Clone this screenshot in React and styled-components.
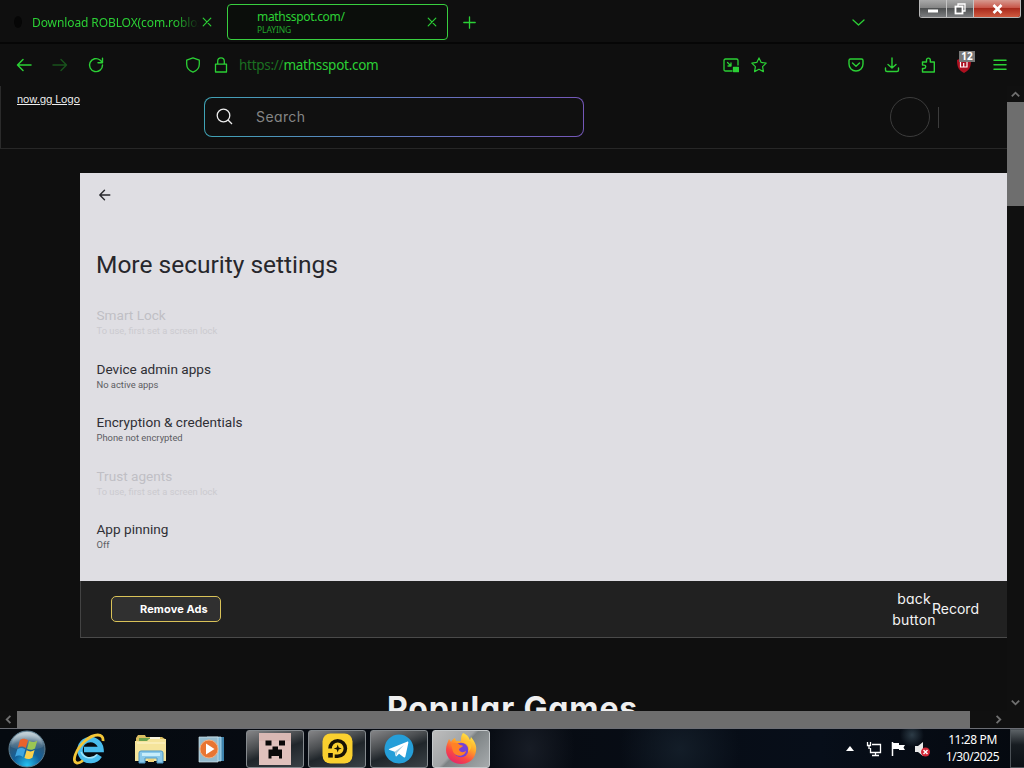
import React from 'react';
import styled, { createGlobalStyle } from 'styled-components';

const GlobalStyle = createGlobalStyle`
  * { box-sizing: border-box; }
  html, body { margin: 0; background: #0f0f0f; overflow: hidden; }
  svg { display: block; flex: none; }
`;

const GREEN = '#2bd035';
const UI = `"Noto Sans", "Open Sans", sans-serif`;
const WEB = `Inter, "Liberation Sans", sans-serif`;

const Screen = styled.div`
  width: 1024px;
  height: 768px;
  display: flex;
  flex-direction: column;
  background: #0f0f0f;
  overflow: hidden;
`;

/* ---------- tab strip ---------- */
const TabStrip = styled.header`
  height: 44px;
  flex: none;
  display: flex;
  align-items: flex-start;
  border-bottom: 2px solid #060606;
  font-family: ${UI};
  color: ${GREEN};
`;
const Tab = styled.div`
  display: flex;
  align-items: center;
  height: 36px;
  margin-top: 4px;
  width: ${(p) => p.$width}px;
  padding: 0 ${(p) => p.$right}px 0 ${(p) => p.$left}px;
  border: 1px solid ${(p) => (p.$active ? '#38cf3f' : 'transparent')};
  border-radius: 4px;
  background: ${(p) => (p.$active ? '#0b0e0b' : 'transparent')};
`;
const Favicon = styled.span`
  width: 8px;
  height: 12px;
  border-radius: 50%;
  margin-right: 10px;
  background: #060606;
`;
const TabText = styled.div`
  flex: 1;
  min-width: 0;
  overflow: hidden;
  white-space: nowrap;
  font-size: 12px;
  line-height: 15px;
  letter-spacing: ${(p) => p.$track || 0}px;
  ${(p) => p.$fade && 'mask-image: linear-gradient(90deg, #000 84%, transparent 99%);'}
`;
const TabStatus = styled.div`
  font-size: 8.5px;
  line-height: 12px;
  letter-spacing: -0.1px;
  color: #22a62b;
`;
const StripButton = styled.div`
  width: ${(p) => p.$width}px;
  height: 44px;
  display: flex;
  align-items: center;
  justify-content: center;
`;
const Spacer = styled.div`
  flex: 1;
`;
const WindowControls = styled.div`
  display: flex;
  height: 18px;
  width: 102px;
  margin: 0 3px 0 44px;
  border: 1px solid #b7b7b7;
  border-top: 0;
  border-radius: 0 0 3px 3px;
  overflow: hidden;
`;
const ControlButton = styled.div`
  display: flex;
  align-items: center;
  justify-content: center;
  flex: ${(p) => (p.$close ? 1 : '0 0 27px')};
  padding-right: ${(p) => (p.$close ? 0 : 1)}px;
  border-right: ${(p) => (p.$close ? 0 : '1px solid #c4c4c4')};
  background: ${(p) =>
    p.$close
      ? 'linear-gradient(#d79a90 0, #c8574a 45%, #a92b1d 50%, #cf5a40 100%)'
      : 'linear-gradient(#a9a9a9 0, #858585 45%, #4f5152 50%, #7c7e80 100%)'};
`;

/* ---------- navigation bar ---------- */
const NavBar = styled.nav`
  height: 42px;
  flex: none;
  display: flex;
  align-items: center;
  padding: 0 6px;
  color: ${GREEN};
`;
const NavButton = styled.div`
  position: relative;
  width: ${(p) => p.$width || 36}px;
  height: 36px;
  padding-bottom: 1px;
  display: flex;
  align-items: center;
  justify-content: center;
  opacity: ${(p) => (p.$dim ? 0.35 : 1)};
`;
const NavGap = styled.div`
  width: 65px;
`;
const Url = styled.div`
  flex: 1;
  padding-left: 4px;
  font: 13.5px/20px ${UI};
  letter-spacing: -0.27px;
  span { color: #1b7021; }
`;
const CountBadge = styled.span`
  position: absolute;
  left: 13px;
  top: 4px;
  width: 16px;
  height: 11px;
  background: #777;
  color: #fff;
  font: bold 10px/11px ${UI};
  text-align: center;
`;

/* ---------- page ---------- */
const Browser = styled.main`
  flex: none;
  height: 642px;
  display: grid;
  grid-template-columns: 1007px 17px;
  grid-template-rows: 625px 17px;
`;
const Page = styled.div`
  overflow: hidden;
  display: flex;
  flex-direction: column;
  font-family: ${WEB};
  font-feature-settings: 'cv11';
`;
const SiteHeader = styled.div`
  height: 63px;
  flex: none;
  display: flex;
  align-items: flex-start;
  border-left: 1px solid #2b2b2b;
  border-bottom: 1px solid #272727;
  padding: 11px 68px 0 16px;
`;
const Logo = styled.a`
  width: 187px;
  margin-top: -5px;
  color: #eee;
  font-size: 10.5px;
  line-height: 15px;
  letter-spacing: -0.1px;
  text-decoration: underline;
`;
const SearchBox = styled.div`
  width: 380px;
  height: 40px;
  display: flex;
  align-items: center;
  gap: 23px;
  padding: 0 0 1px 11px;
  border: 1px solid transparent;
  border-radius: 8px;
  background:
    linear-gradient(#101010, #101010) padding-box,
    linear-gradient(90deg, #3fa3b5, #5f7fc0 45%, #7457b8) border-box;
  color: #858585;
  font-size: 14px;
  letter-spacing: 0.4px;
`;
const Avatar = styled.div`
  width: 40px;
  height: 40px;
  border: 1.5px solid #3c3c3c;
  border-radius: 50%;
`;
const Divider = styled.div`
  width: 1px;
  height: 21px;
  margin: 10px 0 0 8px;
  background: #3c3c3c;
`;
const GamePanel = styled.section`
  flex: none;
  margin: 24px 0 0 80px;
`;
const Settings = styled.div`
  height: 408px;
  background: #dfdee3;
  padding: 16px 16px 0;
  font-family: Roboto, sans-serif;
  color: #27272c;
`;
const SettingsTitle = styled.h1`
  margin: 45px 0 27px;
  font-size: 24.5px;
  line-height: 30px;
  font-weight: 400;
`;
const SettingRow = styled.div`
  height: 53.5px;
  padding-left: 0.5px;
  color: ${(p) => (p.$disabled ? '#c0bfc5' : '#2f2f35')};
`;
const SettingName = styled.div`
  font-size: 13.6px;
  line-height: 17px;
`;
const SettingNote = styled.div`
  font-size: 9.4px;
  line-height: 14px;
  color: ${(p) => (p.$disabled ? '#cbcacf' : '#5c5c62')};
`;
const GameBar = styled.div`
  height: 57px;
  display: flex;
  align-items: center;
  padding: 0 28px 1px 30px;
  background: #212121;
  border-left: 1px solid #434343;
  border-bottom: 1px solid #4a4a4a;
  color: #f4f4f4;
  font-size: 14px;
`;
const RemoveAds = styled.button`
  width: 110px;
  height: 26px;
  margin-top: 1px;
  padding: 0 0 0 28px;
  border: 1px solid #d9c258;
  border-radius: 5px;
  background: #303030;
  color: #fff;
  font: 700 11px/20px ${WEB};
  font-feature-settings: 'cv11';
  letter-spacing: 0.1px;
  text-align: left;
  white-space: nowrap;
`;
const BackLabel = styled.div`
  width: 44px;
  margin-right: -4px;
  line-height: 21px;
  letter-spacing: 0.2px;
  display: flex;
  flex-direction: column;
  align-items: center;
`;
const RecordLabel = styled.div`
  width: 47px;
`;
const Popular = styled.h2`
  margin: 49px 0 0;
  padding-left: 387px;
  font-size: 32px;
  line-height: 44px;
  font-weight: 700;
  letter-spacing: 0.85px;
  color: #efefef;
  white-space: nowrap;
`;

/* ---------- scroll bars ---------- */
const VScroll = styled.div`
  display: flex;
  flex-direction: column;
  align-items: center;
  background: #101010;
`;
const VThumb = styled.div`
  width: 17px;
  height: 104px;
  margin-bottom: auto;
  background: #6e6e6e;
`;
const HScroll = styled.div`
  display: flex;
  align-items: center;
  background: #101010;
`;
const HThumb = styled.div`
  width: 953px;
  height: 17px;
  margin-right: auto;
  background: #6e6e6e;
`;
const ScrollArrow = styled.div`
  width: 17px;
  height: ${(p) => p.$height || 17}px;
  display: flex;
  align-items: center;
  justify-content: center;
  svg { transform: rotate(${(p) => p.$turn}deg); }
`;
const Corner = styled.div`
  background: #101010;
`;

/* ---------- task bar ---------- */
const TaskBar = styled.footer`
  height: 40px;
  flex: none;
  display: flex;
  align-items: center;
  border-top: 1px solid #6b6d74;
  background:
    radial-gradient(circle at 912px 6px, #2c3b46 0, transparent 12px),
    radial-gradient(45px 60px at 530px 20px, #171c25 0, transparent),
    radial-gradient(60px 60px at 680px 20px, #131d28 0, transparent),
    linear-gradient(90deg, #050a10, #070b12 50%, #070e19 80%, #05090f);
`;
const Launcher = styled.div`
  width: ${(p) => p.$width}px;
  display: flex;
  justify-content: center;
`;
const TaskButton = styled.div`
  width: 58px;
  height: 38px;
  margin-right: 4px;
  display: flex;
  align-items: center;
  justify-content: center;
  border: 1px solid ${(p) => (p.$active ? '#c5c9cb' : '#858a8e')};
  border-radius: 3px;
  background: ${(p) =>
    p.$active
      ? 'linear-gradient(135deg, #bdbdbd, #a1a4a6 45%, #7c8284 50%, #a7abad)'
      : 'linear-gradient(160deg, #858587 0, #4b4e51 35%, #20262b 55%, #3a4146 100%)'};
`;
const Tray = styled.div`
  display: flex;
  align-items: center;
  height: 39px;
`;
const TrayIcon = styled.div`
  width: 24px;
  display: flex;
  justify-content: center;
`;
const Clock = styled.div`
  width: 75px;
  margin-left: 1px;
  color: #fff;
  text-align: center;
  font: 12px/16.5px ${UI};
  letter-spacing: -0.4px;
  white-space: nowrap;
`;
const ShowDesktop = styled.div`
  width: 14px;
  height: 39px;
  border: 1px solid #4b5156;
  border-right: 0;
  background: linear-gradient(#5c6266, #171c21 40%, #0b1015);
`;

const Line = ({ size = 16, box = 16, w = 1.2, children }) => (
  <svg width={size} height={size} viewBox={`0 0 ${box} ${box}`} fill="none" stroke="currentColor" strokeWidth={w} strokeLinecap="round" strokeLinejoin="round">
    {children}
  </svg>
);
const Cross = () => <Line size={10} box={10}><path d="M1.200 1.200l7.600 7.600M8.800 1.200L1.200 8.800" /></Line>;
const Caret = () => <svg width="9" height="9" viewBox="0 0 9 9" fill="none" stroke="#707070" strokeWidth="1.800"><path d="M.8 6.400L4.500 2.700l3.700 3.700" /></svg>;

const settings = [
  ['Smart Lock', 'To use, first set a screen lock', true],
  ['Device admin apps', 'No active apps', false],
  ['Encryption & credentials', 'Phone not encrypted', false],
  ['Trust agents', 'To use, first set a screen lock', true],
  ['App pinning', 'Off', false],
];

const StartOrb = () => (
  <svg width="38" height="38" viewBox="0 0 38 38">
    <defs>
      <radialGradient id="orb" cx=".5" cy=".95" r=".85"><stop offset="0" stopColor="#25c3f2" /><stop offset=".45" stopColor="#13609a" /><stop offset=".8" stopColor="#315876" /><stop offset="1" stopColor="#9eb3bf" /></radialGradient>
      <linearGradient id="shine" x2="0" y2="1"><stop stopColor="#d2dde2" stopOpacity=".8" /><stop offset="1" stopColor="#7893a4" stopOpacity=".15" /></linearGradient>
    </defs>
    <circle cx="19" cy="19" r="18" fill="url(#orb)" stroke="#5e7e90" />
    <path d="M3 17C4 7 11 2 19 2s15 5 16 15c-8 4-24 4-32 0z" fill="url(#shine)" />
    <path d="M12 10c3-2 5-1.500 8 .2L17.800 18c-3-1.700-5-2-8-.2z" fill="#e9622b" />
    <path d="M21.200 11c3 1.500 5 1.500 8-.2L27 18.500c-3 1.700-5 1.700-8 .2z" fill="#9bc653" />
    <path d="M9.300 19.300c3-1.800 5-1.500 8 .2L15 27c-3-1.700-5-2-8-.2z" fill="#3fa5e0" />
    <path d="M18.600 20.300c3 1.500 5 1.500 8-.2l-2.200 7.600c-3 1.700-5 1.700-8 .2z" fill="#fcd04c" />
  </svg>
);
const Explorer = () => (
  <svg width="34" height="32" viewBox="0 0 34 32">
    <path d="M2 5l2-3h7l1 2h16l3 2v22H2z" fill="#dbbf62" />
    <path d="M5 5h12v4H5z" fill="#6ba24e" /><path d="M16 4h10v4H16z" fill="#f7f4df" />
    <path d="M1 8h12l2-2h17v22H1z" fill="#f5e49b" />
    <path d="M3 10h28" stroke="#fff6cf" />
    <path d="M5 30V20q0-2 2-2h20q2 0 2 2v10h-6v-5H11v5z" fill="#8ac9ea" stroke="#4e99c7" />
    <path d="M8 20h18v3H8z" fill="#c8edfb" /><path d="M14 26h6v3h-6z" fill="#f0d277" />
  </svg>
);
const Explore = () => (
  <svg width="34" height="34" viewBox="0 0 34 34" fill="none">
    <path d="M27.500 23.500A10.500 10.500 0 1 1 29 17.500H12" stroke="#49bced" strokeWidth="5.500" />
    <path d="M25 22.500A9.500 9.500 0 0 1 9 20" stroke="#a4e5fb" strokeWidth="1.500" />
    <path d="M31 9C32 1 22 1 13 9 4 17-1 30 5 31c2 .3 4-1 6-2.500" stroke="#f3c638" strokeWidth="2.800" />
  </svg>
);
const Media = () => (
  <svg width="28" height="28" viewBox="0 0 28 28">
    <path d="M13 2h13v24H13z" fill="#3e83ac" /><path d="M9 2h14v24H9z" fill="#76b7d8" stroke="#c6e4f0" strokeWidth=".7" />
    <path d="M1 2h19v25H1z" fill="#94bbcd" stroke="#d3e6ee" strokeWidth=".7" />
    <circle cx="11" cy="14" r="9" fill="#e87532" stroke="#f3b080" /><path d="M8 8.500v11l8.500-5.500z" fill="#fff" />
  </svg>
);
const Creeper = () => (
  <svg width="32" height="32" viewBox="0 0 32 32">
    <path d="M0 0h32v32H0z" fill="#dfc1bc" /><path d="M0 0h32v8H0z" fill="#d2aea8" opacity=".45" />
    <path d="M6.500 7.500h6v5h-6zM20 7.500h6v5h-6zM13.500 13.500h5.500v3h4v9h-3v-2.500h-7.500v2.500H9.500v-9h4z" fill="#080808" />
  </svg>
);
const Player = () => (
  <svg width="31" height="31" viewBox="0 0 31 31">
    <rect x=".5" y=".5" width="30" height="30" rx="8" fill="#fad02f" />
    <path d="M8 15.500a7.700 7.700 0 1 1 7.700 7.700h-3" fill="none" stroke="#171205" strokeWidth="3.600" />
    <path d="M6.200 20h4.600v4.600H6.200z" fill="#171205" /><path d="M15.700 11.500l1 3 3 1-3 1-1 3-1-3-3-1 3-1z" fill="#171205" />
  </svg>
);
const Telegram = () => (
  <svg width="30" height="30" viewBox="0 0 30 30">
    <circle cx="15" cy="15" r="14.500" fill="#259ed8" />
    <path d="M5 15l18-7.300c1-.4 1.600.2 1.300 1.300l-2.900 13.500c-.2 1-1 1.200-1.700.7l-4.600-3.400-2.300 2.300c-.7.600-1.200.2-1.300-.6l-.8-3.800-5-1.600c-1-.3-1-.8-.7-1.100z" fill="#fff" />
    <path d="M10.700 17.700L20 11l-7 7.700-.6 3" fill="#a6cde0" />
  </svg>
);
const Fox = () => (
  <svg width="32" height="32" viewBox="0 0 32 32">
    <defs><linearGradient id="fox" x1=".8" x2=".25" y2="1"><stop stopColor="#fff04a" /><stop offset=".4" stopColor="#ffa329" /><stop offset=".7" stopColor="#fa4a43" /><stop offset="1" stopColor="#e3256d" /></linearGradient></defs>
    <path d="M18 0c5 2 6 5 7 7l1-3c4 5 6 9 5 14-1 8-7 13-15 13S1 25 1 17c0-5 2-8 3-11l2 3c1-2 2-3 4-4l1 3 5 .3C16 5 16 2 18 0z" fill="url(#fox)" />
    <circle cx="16" cy="17" r="7.300" fill="#7542d6" />
    <path d="M6 11c4-2 7-1 9 1l3 .8c-1 2-4 2-4 4 1 3 5 3 7 1-1 6-10 7-13 1z" fill="#ff8126" />
    <path d="M18 9c5 1 7 5 5 10 4-3 4-7 2-11z" fill="#ffc32f" />
  </svg>
);

export default function App() {
  return (
    <Screen>
      <GlobalStyle />
      <TabStrip>
        <Tab $width={227} $left={13} $right={13}>
          <Favicon />
          <TabText $fade $track={-0.1}>Download ROBLOX(com.roblox)</TabText>
          <StripButton $width={12}><Cross /></StripButton>
        </Tab>
        <Tab $active $width={221} $left={29} $right={10}>
          <TabText $track={-0.32}>
            mathsspot.com/
            <TabStatus>PLAYING</TabStatus>
          </TabText>
          <StripButton $width={10}><Cross /></StripButton>
        </Tab>
        <StripButton $width={43}>
          <Line size={13} box={13} w={1.3}><path d="M6.500 .8v11.400M.8 6.500h11.400" /></Line>
        </StripButton>
        <Spacer />
        <StripButton $width={34}>
          <Line size={13} box={13} w={1.3}><path d="M1 4l5.500 5L12 4" /></Line>
        </StripButton>
        <WindowControls>
          <ControlButton>
            <svg width="12" height="12"><rect x="1" y="6.500" width="10" height="3" fill="#fff" /></svg>
          </ControlButton>
          <ControlButton>
            <svg width="12" height="12" fill="none" stroke="#fff" strokeWidth="1.300"><path d="M4 3V1h7v7H9" /><rect x="1.500" y="3.500" width="7" height="7" strokeWidth="1.800" /></svg>
          </ControlButton>
          <ControlButton $close>
            <svg width="11" height="10" stroke="#fff" strokeWidth="2.600"><path d="M1.500 1l8 8M9.500 1l-8 8" /></svg>
          </ControlButton>
        </WindowControls>
      </TabStrip>

      <NavBar>
        <NavButton><Line w={1.5}><path d="M15 8H1.500M7 2.500L1.500 8 7 13.500" /></Line></NavButton>
        <NavButton $dim><Line w={1.4}><path d="M1 8h13.500M9 2.500L14.500 8 9 13.500" /></Line></NavButton>
        <NavButton><Line w={1.4}><path d="M14.500 8A6.500 6.500 0 1 1 12 3L14.500 5.500M14.500 1.200v4.500H10" /></Line></NavButton>
        <NavGap />
        <NavButton $width={28}><Line w={1.3}><path d="M8 .9l6.300 2.300v4c0 4-2.500 6.500-6.300 8-3.800-1.500-6.300-4-6.300-8v-4z" /></Line></NavButton>
        <NavButton $width={28}><Line w={1.3}><path d="M2.500 7.200h11v7.800h-11zM4.700 7V4.200a3.300 3.300 0 0 1 6.600 0V7" /></Line></NavButton>
        <Url><span>https://</span>mathsspot.com</Url>
        <NavButton $width={28}>
          <Line w={1.3}><path d="M9 14H2.500Q1 14 1 12.500v-9Q1 2 2.500 2h11Q15 2 15 3.500V8M4.500 5.500L8 9M8 6v3H5" /><path d="M10.500 10.500h5v4h-5z" fill="currentColor" /></Line>
        </NavButton>
        <NavButton $width={28}>
          <Line w={1.2}><path d="M8 .9l2.200 4.500 5 .7-3.600 3.500.8 5L8 12.300l-4.400 2.300.8-5L.8 6.100l5-.7z" /></Line>
        </NavButton>
        <NavGap />
        <NavButton><Line w={1.4}><path d="M2.500 2h11q1.500 0 1.500 1.500V7c0 4-3 7-7 7S1 11 1 7V3.500Q1 2 2.500 2zM4.500 6L8 9.300 11.500 6" /></Line></NavButton>
        <NavButton><Line w={1.4}><path d="M8 1v10M4 7.500L8 11l4-3.500M1.500 11v2q0 1.500 1.500 1.500h10q1.500 0 1.500-1.500v-2" /></Line></NavButton>
        <NavButton><Line w={1.4}><path d="M2.500 5h4V3a1.900 1.900 0 0 1 3.800 0v2h4v10h-11.800v-3.500H4a1.700 1.700 0 0 0 0-3.400H2.500z" /></Line></NavButton>
        <NavButton>
          <svg width="16" height="16" viewBox="0 0 16 16"><path d="M8 0l7 3c0 6-1 10-7 13C2 13 1 9 1 3z" fill="#ad1020" /><path d="M4.500 5v5h6.500V5M7.700 6v4" stroke="#fff" strokeWidth="1.200" fill="none" /></svg>
          <CountBadge>12</CountBadge>
        </NavButton>
        <NavButton><Line w={1.5}><path d="M2 3.300h12M2 7.800h12M2 12.300h12" /></Line></NavButton>
      </NavBar>

      <Browser>
        <Page>
          <SiteHeader>
            <Logo>now.gg Logo</Logo>
            <SearchBox>
              <svg width="17" height="17" viewBox="0 0 17 17" fill="none" stroke="#eee" strokeWidth="1.300"><circle cx="7.500" cy="7.500" r="6.300" /><path d="M12 12l4 4" /></svg>
              <span>Search</span>
            </SearchBox>
            <Spacer />
            <Avatar />
            <Divider />
          </SiteHeader>
          <GamePanel>
            <Settings>
              <Line size={16} box={16} w={1.4}><path d="M13.800 6H4M8.500 1.300L3.800 6l4.700 4.700" /></Line>
              <SettingsTitle>More security settings</SettingsTitle>
              {settings.map(([name, note, off]) => (
                <SettingRow key={name} $disabled={off}>
                  <SettingName>{name}</SettingName>
                  <SettingNote $disabled={off}>{note}</SettingNote>
                </SettingRow>
              ))}
            </Settings>
            <GameBar>
              <RemoveAds>Remove Ads</RemoveAds>
              <Spacer />
              <BackLabel><span>back</span><span>button</span></BackLabel>
              <RecordLabel>Record</RecordLabel>
            </GameBar>
          </GamePanel>
          <Popular>Popular Games</Popular>
        </Page>
        <VScroll>
          <ScrollArrow $turn={0} $height={16}><Caret /></ScrollArrow>
          <VThumb />
          <ScrollArrow $turn={180}><Caret /></ScrollArrow>
        </VScroll>
        <HScroll>
          <ScrollArrow $turn={-90}><Caret /></ScrollArrow>
          <HThumb />
          <ScrollArrow $turn={90}><Caret /></ScrollArrow>
        </HScroll>
        <Corner />
      </Browser>

      <TaskBar>
        <Launcher $width={54}><StartOrb /></Launcher>
        <Launcher $width={70}><Explore /></Launcher>
        <Launcher $width={54}><Explorer /></Launcher>
        <Launcher $width={68}><Media /></Launcher>
        <TaskButton><Creeper /></TaskButton>
        <TaskButton><Player /></TaskButton>
        <TaskButton><Telegram /></TaskButton>
        <TaskButton $active><Fox /></TaskButton>
        <Spacer />
        <Tray>
          <TrayIcon><svg width="8" height="5"><path d="M4 0l4 5H0z" fill="#fff" /></svg></TrayIcon>
          <TrayIcon>
            <svg width="16" height="16" fill="none" stroke="#fff" strokeWidth="1.300"><path d="M6 3.500h8.500v8H4.500V7M9.500 12v2M6 14.500h7M1.500 1v3.500h3V1M3 4.500V8" /></svg>
          </TrayIcon>
          <TrayIcon>
            <svg width="15" height="16"><path d="M1.500 1v14" stroke="#fff" strokeWidth="1.500" /><path d="M2 2h6v2h6l-1.500 2.500L14 9H8V8H2z" fill="#fff" /></svg>
          </TrayIcon>
          <TrayIcon>
            <svg width="17" height="16"><path d="M1 5h3l5-4v14l-5-4H1z" fill="#e8e8e8" /><circle cx="11.500" cy="11" r="4.500" fill="#d32636" /><path d="M9.500 9l4 4M13.500 9l-4 4" stroke="#fff" strokeWidth="1.400" /></svg>
          </TrayIcon>
          <Clock>11:28 PM<br />1/30/2025</Clock>
          <ShowDesktop />
        </Tray>
      </TaskBar>
    </Screen>
  );
}
